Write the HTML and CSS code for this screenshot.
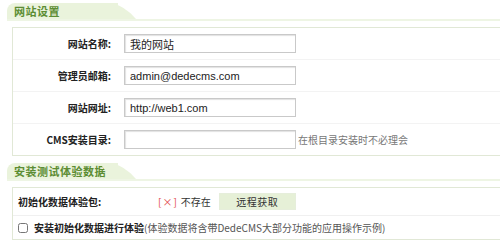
FILE: index.html
```html
<!DOCTYPE html>
<html lang="zh-CN">
<head>
<meta charset="utf-8">
<title>网站设置</title>
<link rel="stylesheet" href="styles.css">
</head>
<body>
<div class="page">
  <div class="sec-head">
    <div class="tab">网站设置</div>
  </div>
  <div class="panel">
    <div class="row">
      <div class="label">网站名称:</div>
      <input class="txt" type="text" value="我的网站">
    </div>
    <div class="row">
      <div class="label">管理员邮箱:</div>
      <input class="txt" type="text" value="admin@dedecms.com">
    </div>
    <div class="row">
      <div class="label">网站网址:</div>
      <input class="txt" type="text" value="http://web1.com">
    </div>
    <div class="row last">
      <div class="label">CMS安装目录:</div>
      <input class="txt" type="text" value="">
      <span class="hint">在根目录安装时不必理会</span>
    </div>
  </div>

  <div class="sec-head second">
    <div class="tab">安装测试体验数据</div>
  </div>
  <div class="panel panel2">
    <div class="row2">
      <div class="label2">初始化数据体验包:</div>
      <span class="err">[×]</span>
      <span class="status">不存在</span>
      <button class="btn" type="button">远程获取</button>
    </div>
    <div class="row2 last">
      <label class="chk"><input type="checkbox"><b>安装初始化数据进行体验</b><span class="note">(体验数据将含带DedeCMS大部分功能的应用操作示例)</span></label>
    </div>
  </div>
</div>
</body>
</html>
```

FILE: styles.css
```css
html, body {
  margin: 0;
  padding: 0;
  background: #fff;
}
body {
  font-family: "Noto Sans CJK SC", sans-serif;
  font-size: 10px;
  color: #333;
  width: 500px;
  height: 248px;
  overflow: hidden;
}
.page {
  padding: 3px 0 0 7px;
}
.sec-head {
  height: 16px;
  border-bottom: 2px solid #eef5e4;
}
.sec-head.second {
  margin-top: 7px;
}
.tab {
  position: relative;
  width: 104px;
  height: 16px;
  padding-left: 7px;
  background: #eaf3dc;
  border-top-left-radius: 8px;
  color: #5c8d33;
  font-weight: bold;
  font-size: 11px;
  line-height: 16px;
  letter-spacing: 0.5px;
  white-space: nowrap;
}
.tab::after {
  content: "";
  position: absolute;
  right: -18px;
  top: 0;
  width: 24px;
  height: 16px;
  background: #eaf3dc;
  border-top-right-radius: 14px 16px;
  transform: skewX(38deg);
  transform-origin: bottom left;
}
.panel {
  margin-top: 6px;
  margin-left: 5px;
  border: 1px solid #e1e8d6;
  border-right: none;
}
.row {
  display: flex;
  align-items: center;
  height: 31px;
  border-bottom: 1px solid #f3f3f3;
}
.row.last {
  border-bottom: none;
}
.label {
  width: 98px;
  text-align: right;
  font-weight: bold;
  color: #222;
  margin-right: 13px;
}
.txt {
  box-sizing: border-box;
  width: 172px;
  height: 19px;
  margin: 0;
  padding: 0 5px;
  border: 1px solid #c9c9c9;
  box-shadow: inset 1px 1px 1px #e2e2e2;
  font-family: "Liberation Sans", "Noto Sans CJK SC", sans-serif;
  font-size: 11px;
  color: #222;
  outline: none;
}
.hint {
  margin-left: 2px;
  color: #777;
}
.panel2 {
  margin-top: 6px;
}
.row2 {
  display: flex;
  align-items: center;
  height: 27px;
  padding-left: 5px;
  border-bottom: 1px solid #f0f0f0;
}
.row2.last {
  height: 23px;
  border-bottom: none;
}
.label2 {
  width: 140px;
  font-weight: bold;
  color: #222;
}
.err {
  color: #e2474a;
  letter-spacing: 1px;
}
.status {
  margin-left: 3px;
  color: #333;
}
.btn {
  margin-left: 8px;
  width: 77px;
  height: 17px;
  padding: 0;
  border: 1px solid #e6eedb;
  background: #e6f0d7;
  font-family: "Noto Sans CJK SC", sans-serif;
  font-size: 10px;
  line-height: 15px;
  letter-spacing: 0.5px;
  color: #333;
}
.chk {
  display: flex;
  align-items: center;
  white-space: nowrap;
}
.chk input {
  width: 10px;
  height: 10px;
  margin: 0 6px 0 0;
}
.chk b {
  color: #222;
}
.note {
  color: #555;
}
```
